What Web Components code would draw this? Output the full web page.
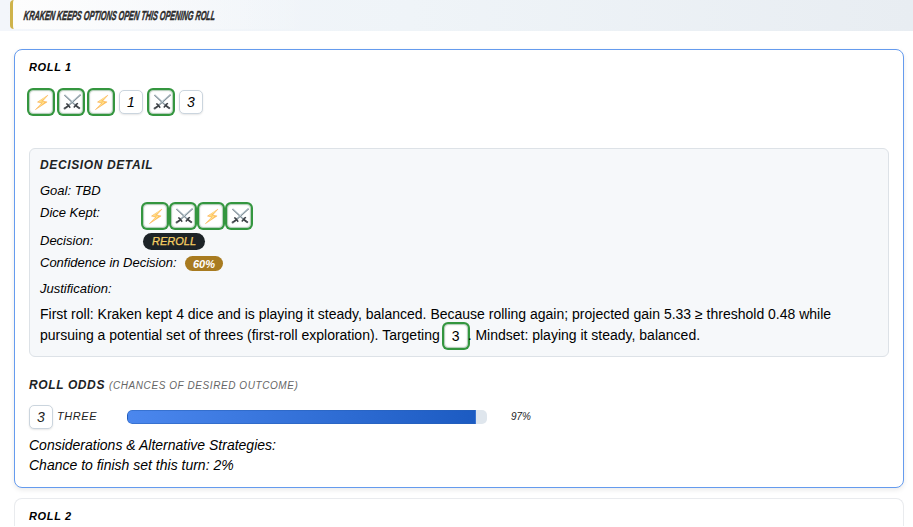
<!DOCTYPE html>
<html lang="en"><head><meta charset="utf-8"><title>Roll log</title>
<style>
body{margin:0;height:527px;overflow:hidden;background:#fff;color:#000;font-family:"Liberation Sans",Arial,sans-serif}
</style></head><body>
<roll-log></roll-log>
<script>
const define=(name,html,init)=>customElements.define(name,class extends HTMLElement{
  connectedCallback(){
    if(this.shadowRoot)return;
    this.attachShadow({mode:'open'}).innerHTML=html;
    if(init)init(this,this.shadowRoot);
  }
});
const BOLT=`<svg viewBox="0 0 18 18"><path d="M15.3 1.2 4.2 8.6 8.6 9.7 2 16.6 14.4 8.4 9.7 7.5Z" fill="#ffc45a" stroke="#f9ab4f" stroke-width=".5" stroke-linejoin="round"/><path d="M12.8 3.2 6.4 8 11 8.9 6.4 12.8" fill="none" stroke="#ffe79a" stroke-width=".9"/></svg>`;
const SWORDS=`<svg viewBox="0 0 20 18"><g fill="none"><path d="M2.5 2 14 12.6M18.6 1.6 6.2 12.6" stroke="#7f8b93" stroke-width="1.5"/><path d="M2.9 1.7 14.2 12M18.3 1.4 6.2 12" stroke="#d3e4ec" stroke-width=".7"/><path d="M4.2 10.6 5.6 11.4 8.2 14.8M16 10.4 14.6 11.2 11.8 14.6" stroke="#3d4146" stroke-width="1.5"/><path d="M6.8 12.4 3 15.2M13.4 12.2 17 14.9" stroke="#3d4146" stroke-width="1.9"/></g><circle cx="2.7" cy="15.4" r="1.1" fill="#55595e"/><circle cx="17.2" cy="15.1" r="1.1" fill="#55595e"/></svg>`;

define('roll-headline',`<style>
:host{display:block;height:31px;background:linear-gradient(90deg,#f3f6fb,#eff4f8 45%,#e8edf2);padding-left:10px;box-sizing:border-box}
.bar{box-sizing:border-box;height:29px;width:300px;border-left:3px solid #cfb34b;border-radius:4px 0 0 4px;padding:0 0 0 11px;background:linear-gradient(90deg,#fdfdfd,#fcfcfb00);line-height:29px}
span{display:inline-block;font:italic 700 13px/29px "Liberation Sans",Arial,sans-serif;color:#2b2b2b;white-space:nowrap;transform:scaleX(.56) skewX(-14deg);transform-origin:0 50%;-webkit-text-stroke:.45px #2b2b2b}
</style><div class="bar"><span><slot></slot></span></div>`);

define('roll-card',`<style>
:host{display:block;box-sizing:border-box;margin:0 9px 10px 14px;padding:0 14px;height:439px;background:#fff;border:1px solid #e9ebee;border-radius:8px}
:host([active]){border-color:#659bee;box-shadow:0 2px 5px #00000016}
h2{margin:0;padding-top:11px;font:italic 700 11px/13px "Liberation Sans",Arial,sans-serif;letter-spacing:.66px;color:#000}
</style><h2></h2><slot></slot>`,(el,r)=>{r.querySelector('h2').textContent=el.getAttribute('heading')});

define('die-face',`<style>
:host{display:inline-flex;box-sizing:border-box;width:24px;height:24px;flex:none;align-items:center;justify-content:center;background:#fff;border:1px solid #cbd5de;border-radius:5px;font-size:14px;line-height:1;box-shadow:0 1px 2px #0000001a}
:host([kept]){box-shadow:0 0 0 2px #34963f,inset 0 0 2px #0002;border-color:#b5d0bb;border-radius:4px}
svg{display:block;width:18px;height:17px;transform:translateX(1px)}
:host([kind=swords]) svg{width:20px;height:18px}
</style><slot></slot>`,(el,r)=>{const k=el.getAttribute('kind');if(k)r.innerHTML+=k==='bolt'?BOLT:SWORDS});

define('dice-row',`<style>:host{display:flex;gap:var(--gap,6px)}</style><slot></slot>`);

define('pill-tag',`<style>
:host{display:inline-block;box-sizing:border-box;height:17px;border-radius:9px;background:#1d2327;color:#f6cf63;font-size:11px;font-weight:400;line-height:17px;padding:0 9px;width:62px;-webkit-text-stroke:.25px #f6cf63}
:host([tone=gold]){height:15px;line-height:16px;background:#a87b20;color:#fff;font-size:11px;font-weight:700;padding:0 8px;width:auto;margin-top:1px;-webkit-text-stroke:0}
</style><slot></slot>`);

define('detail-row',`<style>
:host{display:flex;align-items:flex-start;font:italic 13px/16px "Liberation Sans",Arial,sans-serif;height:22px}
.label{width:var(--label,103px);flex:none;white-space:nowrap}
</style><div class="label"></div><slot></slot>`,(el,r)=>{r.querySelector('.label').textContent=el.getAttribute('label')});

define('decision-detail',`<style>
:host{display:block;box-sizing:border-box;height:209px;margin-top:34px;padding:9px 10px 0;background:#f6f8fa;border:1px solid #dde2e7;border-radius:6px}
h3{margin:0 0 11px;font:italic 700 12px/14px "Liberation Sans",Arial,sans-serif;letter-spacing:.62px;color:#202224}
</style><h3>DECISION DETAIL</h3><slot></slot>`);

define('justify-text',`<style>
:host{display:block;font-size:14px;line-height:21px;white-space:nowrap;margin-top:1px}
::slotted(die-face){vertical-align:middle;margin:-4px 0}
</style><slot></slot>`);

define('roll-odds',`<style>
:host{display:block;margin-top:20px}
h3{display:flex;align-items:baseline;gap:4px;margin:0;font:italic 700 12px/16px "Liberation Sans",Arial,sans-serif;letter-spacing:.62px;color:#202224}
small{font-weight:400;font-size:10px;color:#666;letter-spacing:.58px}
.row{display:flex;align-items:center;margin-top:11px;height:24px;font:italic 11px/13px "Liberation Sans",Arial,sans-serif;color:#222}
.name{width:70px;margin-left:4px;letter-spacing:.55px;transform:translateY(-1px)}
.track{box-sizing:border-box;width:360px;height:14px;border-radius:5px;background:#dfe6ed;overflow:hidden}
.fill{box-sizing:border-box;width:349px;height:14px;background:linear-gradient(90deg,#4b87ee,#1c5bc2);border:1px solid #2860b580;border-radius:5px 0 0 5px}
.pct{margin-left:24px;font-size:10px;transform:translateY(-1px)}
</style><h3>ROLL ODDS <small>(CHANCES OF DESIRED OUTCOME)</small></h3>
<div class="row"><die-face>3</die-face><span class="name">THREE</span><div class="track"><div class="fill"></div></div><span class="pct">97%</span></div>`);

define('strategy-notes',`<style>:host{display:block;margin-top:6px;font:italic 14px/20px "Liberation Sans",Arial,sans-serif}</style><slot></slot>`);

define('roll-log',`<style>
:host{display:block;height:527px;overflow:hidden}
roll-headline{margin-bottom:18px}
.top{font-style:italic;margin-top:16px}
.kept{--gap:4px;margin:-1px 0 0}
.confidence{--label:145px;height:26px}
.wide{height:28px}
.next{height:28px;border-bottom:0;border-radius:8px 8px 0 0;margin-bottom:0}
</style>
<roll-headline>KRAKEN KEEPS OPTIONS OPEN THIS OPENING ROLL</roll-headline>
<roll-card active heading="ROLL 1">
<dice-row class="top"><die-face kept kind="bolt"></die-face><die-face kept kind="swords"></die-face><die-face kept kind="bolt"></die-face><die-face>1</die-face><die-face kept kind="swords"></die-face><die-face>3</die-face></dice-row>
<decision-detail>
<detail-row label="Goal: TBD"></detail-row>
<detail-row label="Dice Kept:" class="wide"><dice-row class="kept"><die-face kept kind="bolt"></die-face><die-face kept kind="swords"></die-face><die-face kept kind="bolt"></die-face><die-face kept kind="swords"></die-face></dice-row></detail-row>
<detail-row label="Decision:"><pill-tag>REROLL</pill-tag></detail-row>
<detail-row label="Confidence in Decision:" class="confidence"><pill-tag tone="gold">60%</pill-tag></detail-row>
<detail-row label="Justification:"></detail-row>
<justify-text>First roll: Kraken kept 4 dice and is playing it steady, balanced. Because rolling again; projected gain 5.33 ≥ threshold 0.48 while<br>pursuing a potential set of threes (first-roll exploration). Targeting <die-face kept>3</die-face>. Mindset: playing it steady, balanced.</justify-text>
</decision-detail>
<roll-odds></roll-odds>
<strategy-notes>Considerations &amp; Alternative Strategies:<br>Chance to finish set this turn: 2%</strategy-notes>
</roll-card>
<roll-card class="next" heading="ROLL 2"></roll-card>`);
</script></body></html>
